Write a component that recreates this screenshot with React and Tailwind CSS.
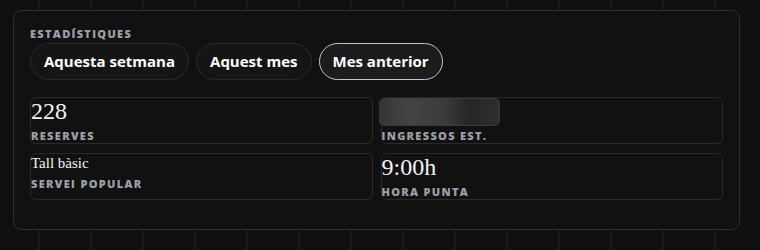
import React from "react";

const label = "font-['Open_Sans',sans-serif] font-extrabold text-[11px] leading-[14px] tracking-[0.12em] uppercase text-[#9aa0a8]";
const value = "font-['Liberation_Serif',serif] text-[24px] leading-[27px] text-[#f4f4f4] oldstyle-nums";

function Pill({ children, active }) {
  return (
    <button
      className={
        "h-[37px] rounded-full px-[13px] font-['Open_Sans',sans-serif] font-bold text-[15px] text-white border " +
        (active ? "border-[#c4c4c4] bg-[#1c1c1c]" : "border-[#2a2a2a] bg-[#151515]")
      }
    >
      {children}
    </button>
  );
}

export default function App() {
  return (
    <div className="w-[760px] h-[250px] bg-[#0f0f0f] bg-[linear-gradient(to_right,#1a1a1a_2px,transparent_2px)] bg-[length:52px_100%] bg-[position:38px_0] pt-[10px] pl-[13px]">
      <div className="w-[727px] h-[220px] rounded-lg border border-[#2e2e2e] bg-[#111111] px-4 pt-[16px]">
        <div className={label}>Estadístiques</div>
        <div className="mt-[2px] flex gap-[7px]">
          <Pill>Aquesta setmana</Pill>
          <Pill>Aquest mes</Pill>
          <Pill active>Mes anterior</Pill>
        </div>
        <div className="mt-[17px] grid grid-cols-2 gap-x-2 gap-y-[9px]">
          <div className="h-[47px] rounded-md border border-[#2a2a2a]">
            <div className={value}>228</div>
            <div className={label + " mt-[4px]"}>Reserves</div>
          </div>
          <div className="h-[47px] rounded-md border border-[#2a2a2a]">
            <div className="h-[28px] w-[121px] -ml-[3px] rounded-[5px] border border-[#3a3a3a] bg-[linear-gradient(90deg,#353535,#454545_25%,#3a3a3a_55%,#262626_75%,#2e2e2e)] blur-[0.5px]" />
            <div className={label + " mt-[3px]"}>Ingressos est.</div>
          </div>
          <div className="h-[47px] rounded-md border border-[#2a2a2a]">
            <div className="font-['Liberation_Serif',serif] text-[15px] leading-[19px] text-[#f4f4f4]">Tall bàsic</div>
            <div className={label + " mt-[4px]"}>Servei popular</div>
          </div>
          <div className="h-[47px] rounded-md border border-[#2a2a2a]">
            <div className={value}>9:00h</div>
            <div className={label + " mt-[4px]"}>Hora punta</div>
          </div>
        </div>
      </div>
    </div>
  );
}
